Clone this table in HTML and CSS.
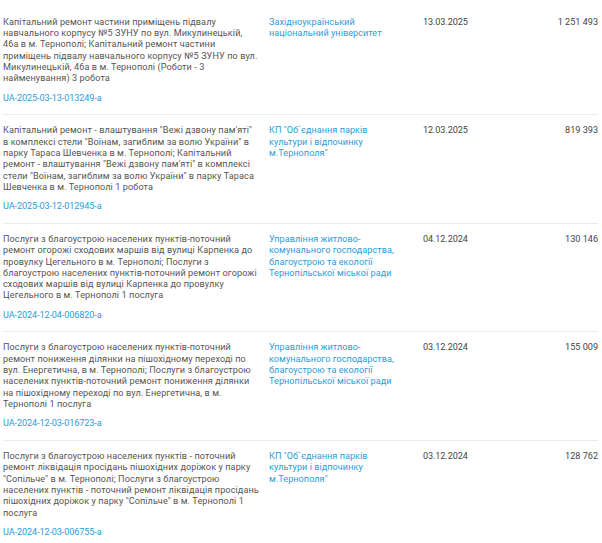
FILE: index.html
```html
<!DOCTYPE html>
<html lang="uk">
<head>
<meta charset="utf-8">
<link rel="stylesheet" href="styles.css">
</head>
<body>
<div class="list">
  <div class="row">
    <div class="desc">
      <p class="title">Капітальний ремонт частини приміщень підвалу<br>навчального корпусу №5 ЗУНУ по вул. Микулинецькій,<br>46а в м. Тернополі; Капітальний ремонт частини<br>приміщень підвалу навчального корпусу №5 ЗУНУ по вул.<br>Микулинецькій, 46а в м. Тернополі (Роботи - 3<br>найменування) 3 робота</p>
      <a class="id" href="#">UA-2025-03-13-013249-a</a>
    </div>
    <div class="org"><a href="#">Західноукраїнський національний університет</a></div>
    <div class="date">13.03.2025</div>
    <div class="amount">1 251 493</div>
  </div>
  <div class="row">
    <div class="desc">
      <p class="title">Капітальний ремонт - влаштування "Вежі дзвону пам'яті"<br>в комплексі стели "Воїнам, загиблим за волю України" в<br>парку Тараса Шевченка в м. Тернополі; Капітальний<br>ремонт - влаштування "Вежі дзвону пам'яті" в комплексі<br>стели "Воїнам, загиблим за волю України" в парку Тараса<br>Шевченка в м. Тернополі 1 робота</p>
      <a class="id" href="#">UA-2025-03-12-012945-a</a>
    </div>
    <div class="org"><a href="#">КП "Об`єднання парків культури і відпочинку м.Тернополя"</a></div>
    <div class="date">12.03.2025</div>
    <div class="amount">819 393</div>
  </div>
  <div class="row">
    <div class="desc">
      <p class="title">Послуги з благоустрою населених пунктів-поточний<br>ремонт огорожі сходових маршів від вулиці Карпенка до<br>провулку Цегельного в м. Тернополі; Послуги з<br>благоустрою населених пунктів-поточний ремонт огорожі<br>сходових маршів від вулиці Карпенка до провулку<br>Цегельного в м. Тернополі 1 послуга</p>
      <a class="id" href="#">UA-2024-12-04-006820-a</a>
    </div>
    <div class="org"><a href="#">Управління житлово-комунального господарства, благоустрою та екології Тернопільської міської ради</a></div>
    <div class="date">04.12.2024</div>
    <div class="amount">130 146</div>
  </div>
  <div class="row">
    <div class="desc">
      <p class="title">Послуги з благоустрою населених пунктів-поточний<br>ремонт пониження ділянки на пішохідному переході по<br>вул. Енергетична, в м. Тернополі; Послуги з благоустрою<br>населених пунктів-поточний ремонт пониження ділянки<br>на пішохідному переході по вул. Енергетична, в м.<br>Тернополі 1 послуга</p>
      <a class="id" href="#">UA-2024-12-03-016723-a</a>
    </div>
    <div class="org"><a href="#">Управління житлово-комунального господарства, благоустрою та екології Тернопільської міської ради</a></div>
    <div class="date">03.12.2024</div>
    <div class="amount">155 009</div>
  </div>
  <div class="row">
    <div class="desc">
      <p class="title">Послуги з благоустрою населених пунктів - поточний<br>ремонт ліквідація просідань пішохідних доріжок у парку<br>"Сопільче" в м. Тернополі; Послуги з благоустрою<br>населених пунктів - поточний ремонт ліквідація просідань<br>пішохідних доріжок у парку "Сопільче" в м. Тернополі 1<br>послуга</p>
      <a class="id" href="#">UA-2024-12-03-006755-a</a>
    </div>
    <div class="org"><a href="#">КП "Об`єднання парків культури і відпочинку м.Тернополя"</a></div>
    <div class="date">03.12.2024</div>
    <div class="amount">128 762</div>
  </div>
</div>
</body>
</html>
```
FILE: styles.css
```css
* { box-sizing: border-box; }
html, body { margin: 0; padding: 0; background: #fff; }
body {
  font-family: Roboto, "Noto Sans", sans-serif;
  font-size: 9.1px;
  line-height: 11.3px;
  color: #555;
}
.list { padding: 5.5px 4px 0 3px; }
.row {
  display: grid;
  grid-template-columns: 266px 154px 1fr auto;
  padding: 10.25px 0;
  border-top: 1px solid #ececec;
}
.row:first-child { border-top-color: transparent; }
.desc { padding-right: 4px; }
.title { margin: 0 0 8px; color: #555; white-space: nowrap; letter-spacing: 0.1px; }
.id, .org a { color: #2e9bd9; text-decoration: none; }
.id { display: block; letter-spacing: -0.1px; }
.org { padding-right: 24px; letter-spacing: 0.05px; }
.date { color: #444; letter-spacing: -0.1px; }
.amount { color: #444; text-align: right; }
```
